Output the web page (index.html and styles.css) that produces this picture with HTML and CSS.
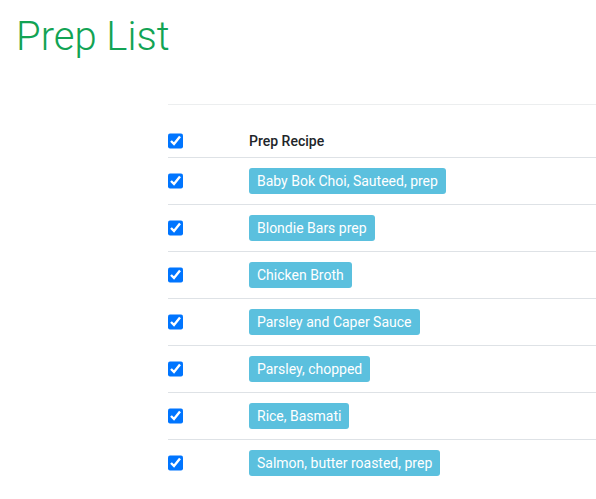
FILE: index.html
```html
<!DOCTYPE html>
<html>
<head>
<meta charset="utf-8">
<link rel="stylesheet" href="styles.css">
</head>
<body>
<div class="page">
  <h1 class="title">Prep List</h1>
  <div class="list">
    <div class="row head">
      <div class="cell check"><input type="checkbox" checked></div>
      <div class="cell label">Prep Recipe</div>
    </div>
    <div class="row">
      <div class="cell check"><input type="checkbox" checked></div>
      <div class="cell"><span class="badge">Baby Bok Choi, Sauteed, prep</span></div>
    </div>
    <div class="row">
      <div class="cell check"><input type="checkbox" checked></div>
      <div class="cell"><span class="badge">Blondie Bars prep</span></div>
    </div>
    <div class="row">
      <div class="cell check"><input type="checkbox" checked></div>
      <div class="cell"><span class="badge">Chicken Broth</span></div>
    </div>
    <div class="row">
      <div class="cell check"><input type="checkbox" checked></div>
      <div class="cell"><span class="badge">Parsley and Caper Sauce</span></div>
    </div>
    <div class="row">
      <div class="cell check"><input type="checkbox" checked></div>
      <div class="cell"><span class="badge">Parsley, chopped</span></div>
    </div>
    <div class="row">
      <div class="cell check"><input type="checkbox" checked></div>
      <div class="cell"><span class="badge">Rice, Basmati</span></div>
    </div>
    <div class="row last">
      <div class="cell check"><input type="checkbox" checked></div>
      <div class="cell"><span class="badge">Salmon, butter roasted, prep</span></div>
    </div>
  </div>
</div>
</body>
</html>
```

FILE: styles.css
```css
html, body {
  margin: 0;
  padding: 0;
  background: #fff;
}
body {
  font-family: Roboto, "Liberation Sans", sans-serif;
  color: #212529;
}
.page {
  padding: 0 0 0 16px;
}
.title {
  margin: 13px 0 0 0;
  font-size: 40px;
  line-height: 48px;
  font-weight: 300;
  color: #12a354;
}
.list {
  margin: 43px 0 0 152px;
  border-top: 1px solid #eceeef;
}
.row {
  display: grid;
  grid-template-columns: 81px 1fr;
  align-items: center;
  border-bottom: 1px solid #dee2e6;
  height: 46px;
}
.row.head {
  height: 52px;
  align-items: end;
}
.row.head .cell {
  padding-bottom: 8px;
}
.row.last {
  border-bottom: none;
}
.cell {
  display: flex;
  align-items: center;
}
.check input {
  margin: 0;
  width: 15px;
  height: 16px;
}
.label {
  font-size: 14px;
  font-weight: 500;
  line-height: 16px;
}
.badge {
  display: inline-block;
  background: #5bc0de;
  color: #fff;
  font-size: 14px;
  line-height: 26px;
  padding: 0 8px;
  border-radius: 3px;
}
```
